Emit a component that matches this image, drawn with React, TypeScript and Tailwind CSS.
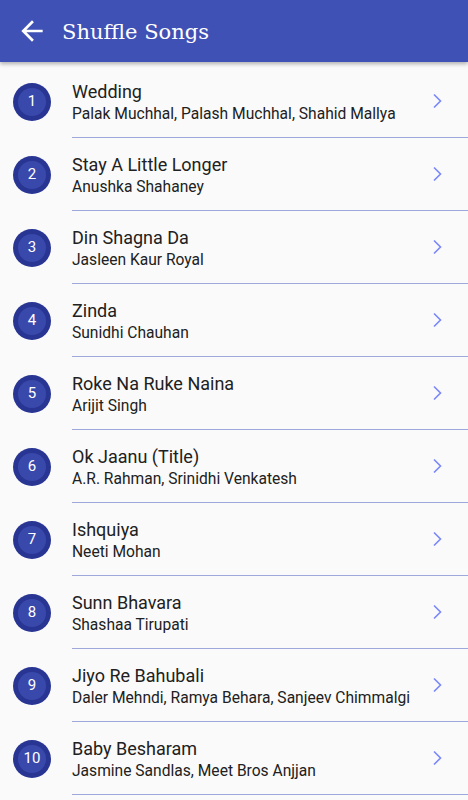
import React from "react";

const songs = [
  ["Wedding", "Palak Muchhal, Palash Muchhal, Shahid Mallya"],
  ["Stay A Little Longer", "Anushka Shahaney"],
  ["Din Shagna Da", "Jasleen Kaur Royal"],
  ["Zinda", "Sunidhi Chauhan"],
  ["Roke Na Ruke Naina", "Arijit Singh"],
  ["Ok Jaanu (Title)", "A.R. Rahman, Srinidhi Venkatesh"],
  ["Ishquiya", "Neeti Mohan"],
  ["Sunn Bhavara", "Shashaa Tirupati"],
  ["Jiyo Re Bahubali", "Daler Mehndi, Ramya Behara, Sanjeev Chimmalgi"],
  ["Baby Besharam", "Jasmine Sandlas, Meet Bros Anjjan"],
];

export default function App() {
  return (
    <div className="w-[468px] h-[800px] overflow-hidden bg-[#fafafa]" style={{ fontFamily: "Roboto, sans-serif" }}>
      <div className="relative z-10 h-[62px] bg-[#3f51b5] flex items-center shadow-[0_2px_4px_rgba(0,0,0,0.3)]">
        <svg className="ml-[16px] w-[32px] h-[32px]" viewBox="0 0 24 24">
          <path d="M20 11H7.83l5.59-5.59L12 4l-8 8 8 8 1.41-1.41L7.83 13H20v-2z" fill="#fff" />
        </svg>
        <span className="ml-[14px] pt-[3px] text-white text-[21px]" style={{ fontFamily: '"DejaVu Serif", serif' }}>Shuffle Songs</span>
      </div>
      <div className="pt-[3px]">
        {songs.map(([t, s], i) => (
          <div key={i} className="flex h-[73px]">
            <div className="w-[72px] flex items-center">
              <div className="ml-[13px] w-[38px] h-[38px] rounded-full bg-[#283593] flex items-center justify-center">
                <div className="w-[28px] h-[28px] rounded-full bg-[#3949ab] flex items-center justify-center text-white text-[15px]">
                  {i + 1}
                </div>
              </div>
            </div>
            <div className="flex-1 flex items-center border-b border-[#9fa8da]">
              <div className="flex-1 pt-[3px]">
                <div className="text-[18px] leading-[22px] text-[#212121]">{t}</div>
                <div className="text-[15.6px] leading-[20px] text-[#212121] mt-[1px]">{s}</div>
              </div>
              <svg className="mr-[26px] w-[10px] h-[16px]" viewBox="0 0 10 16">
                <path d="M2 1.5 L8.5 8 L2 14.5" fill="none" stroke="#7986fb" strokeWidth="1.6" />
              </svg>
            </div>
          </div>
        ))}
      </div>
    </div>
  );
}
